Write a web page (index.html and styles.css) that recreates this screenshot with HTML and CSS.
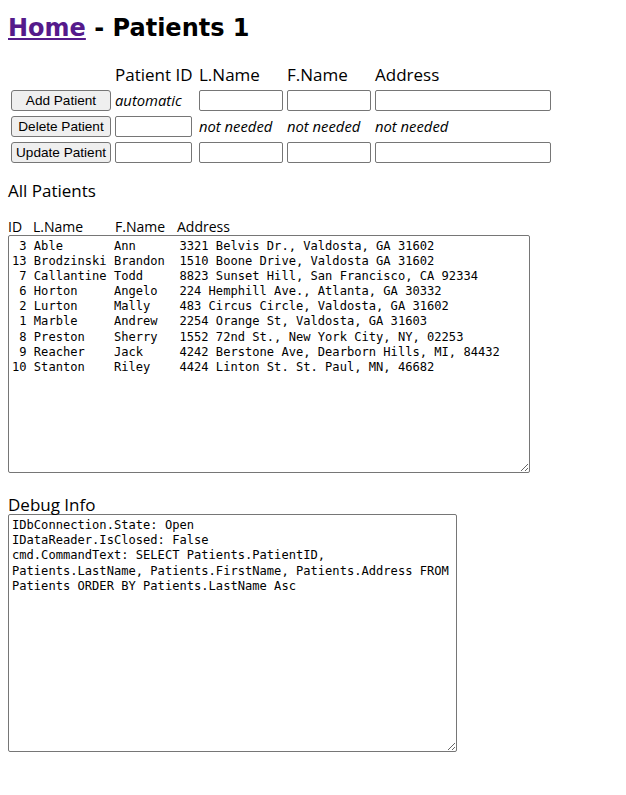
FILE: index.html
```html
<!DOCTYPE html>
<html>
<head>
<meta charset="utf-8">
<title>Patients 1</title>
<link rel="stylesheet" href="styles.css">
</head>
<body>
<h1 class="title"><a href="#" class="home">Home</a> - Patients 1</h1>
<table class="form">
  <tr class="head">
    <td></td>
    <td class="col-id">Patient ID</td>
    <td>L.Name</td>
    <td>F.Name</td>
    <td>Address</td>
  </tr>
  <tr>
    <td><button class="btn">Add Patient</button></td>
    <td class="note">automatic</td>
    <td><input class="in in-name" type="text"></td>
    <td><input class="in in-name" type="text"></td>
    <td><input class="in in-addr" type="text"></td>
  </tr>
  <tr>
    <td><button class="btn">Delete Patient</button></td>
    <td><input class="in in-id" type="text"></td>
    <td class="note">not needed</td>
    <td class="note">not needed</td>
    <td class="note">not needed</td>
  </tr>
  <tr>
    <td><button class="btn">Update Patient</button></td>
    <td><input class="in in-id" type="text"></td>
    <td><input class="in in-name" type="text"></td>
    <td><input class="in in-name" type="text"></td>
    <td><input class="in in-addr" type="text"></td>
  </tr>
</table>

<div class="section-title all">All Patients</div>
<div class="cols"><span class="c-id">ID</span><span class="c-ln">L.Name</span><span class="c-fn">F.Name</span><span>Address</span></div>
<textarea class="list" spellcheck="false"> 3 Able       Ann      3321 Belvis Dr., Valdosta, GA 31602
13 Brodzinski Brandon  1510 Boone Drive, Valdosta GA 31602
 7 Callantine Todd     8823 Sunset Hill, San Francisco, CA 92334
 6 Horton     Angelo   224 Hemphill Ave., Atlanta, GA 30332
 2 Lurton     Mally    483 Circus Circle, Valdosta, GA 31602
 1 Marble     Andrew   2254 Orange St, Valdosta, GA 31603
 8 Preston    Sherry   1552 72nd St., New York City, NY, 02253
 9 Reacher    Jack     4242 Berstone Ave, Dearborn Hills, MI, 84432
10 Stanton    Riley    4424 Linton St. St. Paul, MN, 46682</textarea>

<div class="section-title debug-title">Debug Info</div>
<textarea class="debug" spellcheck="false">IDbConnection.State: Open
IDataReader.IsClosed: False
cmd.CommandText: SELECT Patients.PatientID, Patients.LastName, Patients.FirstName, Patients.Address FROM Patients ORDER BY Patients.LastName Asc</textarea>
</body>
</html>
```
FILE: styles.css
```css
html, body {
  background: #ffffff;
}
body {
  margin: 8px;
  font-family: "Open Sans", "DejaVu Sans", sans-serif;
  color: #000;
}
.title {
  margin: 0;
  font-family: "DejaVu Sans", Verdana, sans-serif;
  font-size: 24px;
  font-weight: bold;
  line-height: 40px;
}
.home {
  color: #551a8b;
  text-decoration: underline;
}
.form {
  margin-top: 14px;
  border-collapse: separate;
  border-spacing: 2px;
}
.form td {
  padding: 1px;
  vertical-align: middle;
}
.head td {
  font-size: 17px;
  line-height: 20px;
  white-space: nowrap;
}
.col-id {
  width: 80px;
}
.note {
  font-style: italic;
  font-size: 14.8px;
  white-space: nowrap;
}
.btn {
  width: 100px;
  height: 21px;
  padding: 0 4px;
  margin: 0;
  font-family: "Liberation Sans", Arial, sans-serif;
  font-size: 13.6px;
  color: #000;
  background: #efefef;
  border: 1px solid #767676;
  border-radius: 3px;
  box-sizing: border-box;
  display: block;
}
.in {
  height: 21px;
  margin: 0;
  padding: 1px 2px;
  border: 1px solid #767676;
  border-radius: 2px;
  box-sizing: border-box;
  display: block;
  font-size: 13px;
  background: #fff;
}
.in-id { width: 77px; }
.in-name { width: 84px; }
.in-addr { width: 176px; }
.form tr:not(.head) td {
  height: 22px;
}
.section-title {
  font-size: 17px;
  line-height: 22px;
}
.all {
  margin-top: 14px;
}
.cols {
  margin-top: 17px;
  font-size: 14px;
  line-height: 16px;
  display: flex;
}
.c-id { width: 25px; }
.c-ln { width: 82px; }
.c-fn { width: 62px; }
textarea {
  display: block;
  margin: 0;
  box-sizing: border-box;
  border: 1px solid #767676;
  border-radius: 2px;
  background: #fff;
  color: #000;
  resize: both;
}
.list {
  width: 522px;
  height: 238px;
  padding: 3px 3px 2px;
  font-family: "DejaVu Sans Mono", "Liberation Mono", monospace;
  font-size: 12.1px;
  line-height: 15.1px;
  white-space: pre;
  overflow: hidden;
}
.debug-title {
  margin-top: 22px;
  line-height: 19px;
}
.debug {
  width: 449px;
  height: 238px;
  padding: 3px 3px 2px;
  font-family: "DejaVu Sans Mono", "Liberation Mono", monospace;
  font-size: 12.1px;
  line-height: 15.2px;
  overflow: hidden;
}
```
